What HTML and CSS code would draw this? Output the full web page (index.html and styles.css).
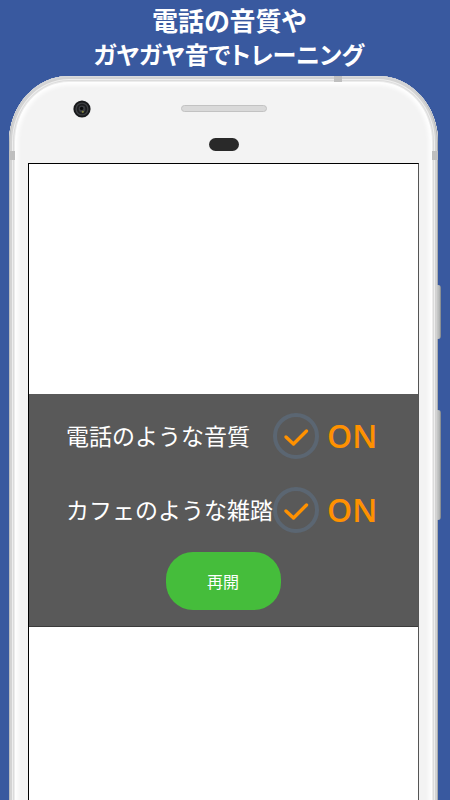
FILE: index.html
```html
<!DOCTYPE html>
<html lang="ja">
<head>
<meta charset="utf-8">
<meta name="viewport" content="width=device-width, initial-scale=1">
<title>電話の音質やガヤガヤ音でトレーニング</title>
<link rel="stylesheet" href="styles.css">
</head>
<body>
<h1 class="headline">電話の音質や<br><span class="headline-sub">ガヤガヤ音でトレーニング</span></h1>
<main class="phone">
  <span class="key key-power"></span>
  <span class="key key-volume"></span>
  <span class="antenna antenna-top"></span>
  <span class="antenna antenna-left"></span>
  <span class="antenna antenna-right"></span>
  <div class="bezel">
    <svg class="camera" viewBox="0 0 18 18" aria-hidden="true">
      <circle cx="9" cy="9" r="8.6" fill="#18191b"/>
      <circle cx="9" cy="9" r="6.6" fill="#3d3f42"/>
      <circle cx="9" cy="9" r="5.2" fill="#1c1d1f"/>
      <circle cx="9" cy="9" r="3.4" fill="#3a3c40"/>
      <circle cx="8.6" cy="8.4" r="1.7" fill="#08090a"/>
      <circle cx="9.8" cy="11.8" r="1.1" fill="#85863b"/>
    </svg>
    <span class="speaker"></span>
    <span class="sensor"></span>
  </div>
  <div class="screen">
    <form class="panel">
      <div class="options">
        <label class="option-name" for="phone-sound">電話のような音質</label>
        <span class="check">
          <input class="check-box" type="checkbox" id="phone-sound" checked>
          <svg class="check-mark" viewBox="0 0 46 46" aria-hidden="true"><path d="M13 24 20.5 31 33.5 18"/></svg>
        </span>
        <output class="state" for="phone-sound">ON</output>
        <label class="option-name" for="cafe-sound">カフェのような雑踏</label>
        <span class="check">
          <input class="check-box" type="checkbox" id="cafe-sound" checked>
          <svg class="check-mark" viewBox="0 0 46 46" aria-hidden="true"><path d="M13 24 20.5 31 33.5 18"/></svg>
        </span>
        <output class="state" for="cafe-sound">ON</output>
      </div>
      <button class="resume" type="button">再開</button>
    </form>
  </div>
</main>
</body>
</html>
```
FILE: styles.css
```css
* {
  box-sizing: border-box;
}

body {
  display: flex;
  flex-direction: column;
  min-height: 100vh;
  margin: 0;
  background: #39599f;
  font-family: "Noto Sans CJK JP", sans-serif;
}

.headline {
  margin: 0;
  padding: 3px 0 6px 8px;
  color: #fff;
  font-size: 26px;
  font-weight: 700;
  line-height: 33px;
  text-align: center;
  font-feature-settings: "palt";
}

.headline-sub {
  font-size: 24px;
}

.phone {
  position: relative;
  display: flex;
  flex: 1;
  flex-direction: column;
  margin: 0 12px 0 9px;
  padding: 0 19px;
  overflow-x: visible;
  overflow-y: clip;
}

/* The shell runs past the lower edge, so its rim shows on three sides only. */
.phone::before {
  content: "";
  position: absolute;
  z-index: -1;
  inset: 0 0 -80px;
  border-radius: 60px / 66px;
  background: #f3f3f3;
  box-shadow:
    inset 0 1px 0 #d8dade,
    inset 1px 0 0 #b9bcc0,
    inset -1px 0 0 #a9acb0,
    inset 0 0 0 3px #d3d3d3,
    inset 0 0 0 4px #eeeeee,
    inset 0 0 0 5px #dcdcdc,
    inset 0 0 0 6px #ececec,
    inset 0 0 4px 9px #fff;
}

.bezel {
  display: grid;
  grid-template-columns: 1fr auto 1fr;
  grid-template-rows: 17px 18px;
  row-gap: 18px;
  align-items: center;
  padding: 24px 0 10px;
}

.camera {
  width: 18px;
  height: 18px;
  margin-left: 45px;
}

.speaker {
  width: 86px;
  height: 7px;
  border: 1px solid #c2c2c2;
  border-radius: 4px;
  background: #d9d9d9;
}

.sensor {
  grid-column: 2;
  justify-self: center;
  width: 30px;
  height: 13px;
  border-radius: 7px;
  background: #292929;
}

.antenna {
  position: absolute;
  background: #bfbfbf;
}

.antenna-top {
  top: 0;
  right: 96px;
  width: 8px;
  height: 6px;
}

.antenna-left,
.antenna-right {
  top: 75px;
  width: 6px;
  height: 9px;
}

.antenna-left {
  left: 0;
}

.antenna-right {
  right: 0;
}

.key {
  position: absolute;
  right: -3px;
  width: 4px;
  border-radius: 0 3px 3px 0;
  background: linear-gradient(90deg, #c9cbcb, #b5b7b7 60%, #777d84);
}

.key-power {
  top: 209px;
  height: 54px;
}

.key-volume {
  top: 334px;
  height: 110px;
}

.screen {
  flex: 1;
  padding-top: 230px;
  border: solid #000;
  border-width: 1px 1px 0;
  border-right-color: #555;
  background: #fff;
}

.panel {
  display: flex;
  flex-direction: column;
  align-items: center;
  gap: 19px;
  padding: 19px 37px 16px;
  border-bottom: 1px solid #3b3b3b;
  background: #595959;
}

.options {
  display: grid;
  grid-template-columns: auto auto 1fr;
  align-items: start;
  align-self: stretch;
  row-gap: 28px;
}

.option-name {
  color: #fff;
  font-size: 23px;
  line-height: 44px;
  white-space: nowrap;
}

.check {
  display: grid;
  width: 46px;
  height: 46px;
}

.check-box,
.check-mark {
  grid-area: 1 / 1;
  width: 46px;
  height: 46px;
  margin: 0;
}

.check-box {
  appearance: none;
  border: 4px solid #5b6672;
  border-radius: 50%;
}

.check-mark {
  visibility: hidden;
  fill: none;
  stroke: #ff9100;
  stroke-width: 3.4;
  stroke-linecap: round;
  stroke-linejoin: round;
  pointer-events: none;
}

.check-box:checked + .check-mark {
  visibility: visible;
}

.state {
  padding-left: 8px;
  color: #ff9100;
  font-family: "Open Sans", "Noto Sans", sans-serif;
  font-size: 32px;
  font-weight: 600;
  line-height: 46px;
}

.resume {
  width: 115px;
  height: 58px;
  margin-right: 1px;
  padding: 0;
  border: 0;
  border-radius: 27px;
  background: #45bd3b;
  color: #fff;
  font-family: inherit;
  font-size: 16px;
}
```
